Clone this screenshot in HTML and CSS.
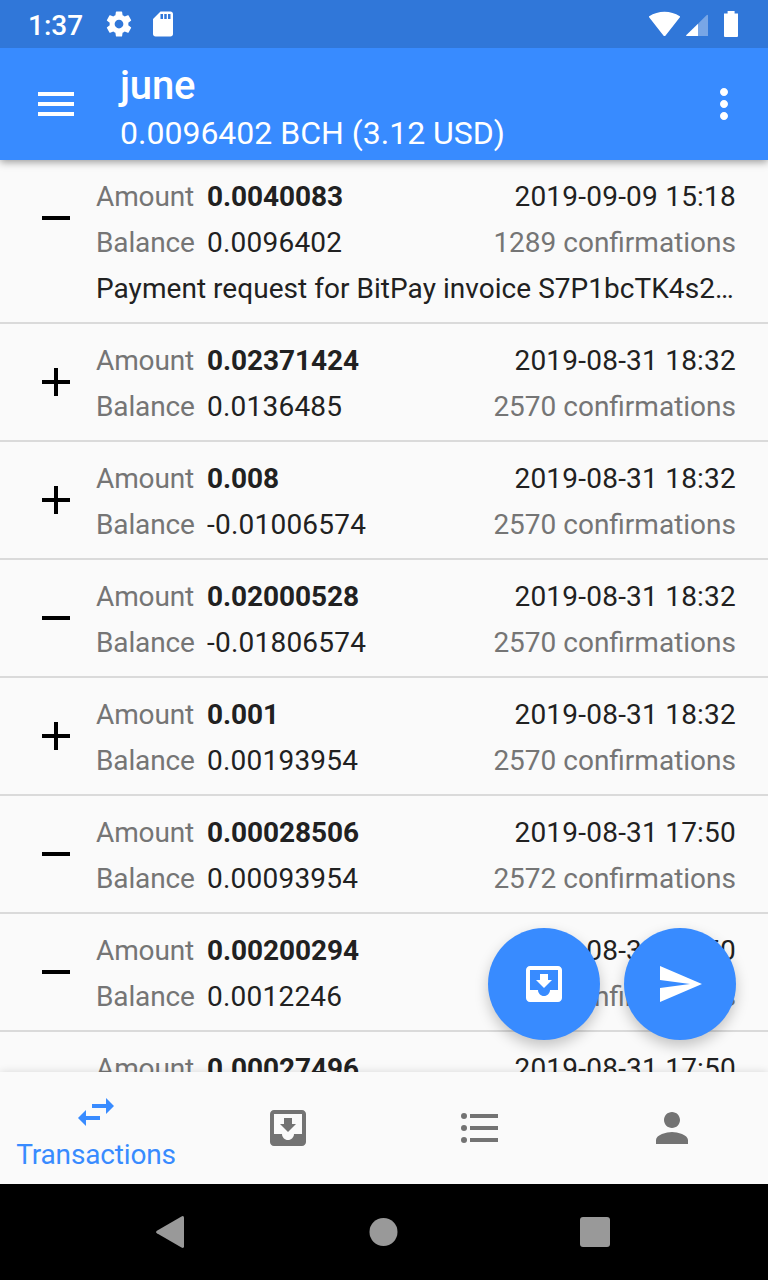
FILE: index.html
```html
<!DOCTYPE html>
<html lang="en">
<head>
<meta charset="utf-8">
<title>june</title>
<link rel="stylesheet" href="styles.css">
</head>
<body>
<div class="screen">
  <div class="status">
    <span class="clock">1:37</span>
    <svg class="s-icon" viewBox="0 0 24 24"><path d="M19.43 12.98c.04-.32.07-.64.07-.98s-.03-.66-.07-.98l2.11-1.65c.19-.15.24-.42.12-.64l-2-3.46c-.12-.22-.39-.3-.61-.22l-2.49 1c-.52-.4-1.08-.73-1.69-.98l-.38-2.65C14.46 2.18 14.25 2 14 2h-4c-.25 0-.46.18-.49.42l-.38 2.65c-.61.25-1.17.59-1.69.98l-2.49-1c-.23-.09-.49 0-.61.22l-2 3.46c-.13.22-.07.49.12.64l2.11 1.65c-.04.32-.07.65-.07.98s.03.66.07.98l-2.11 1.65c-.19.15-.24.42-.12.64l2 3.46c.12.22.39.3.61.22l2.49-1c.52.4 1.08.73 1.69.98l.38 2.65c.03.24.24.42.49.42h4c.25 0 .46-.18.49-.42l.38-2.65c.61-.25 1.17-.59 1.69-.98l2.49 1c.23.09.49 0 .61-.22l2-3.46c.12-.22.07-.49-.12-.64l-2.11-1.65zM12 15.5c-1.93 0-3.5-1.57-3.5-3.5s1.57-3.5 3.5-3.5 3.5 1.57 3.5 3.5-1.57 3.5-3.5 3.5z"/></svg>
    <svg class="s-icon" viewBox="0 0 24 24"><path d="M18 2h-8L4.02 8 4 20c0 1.1.9 2 2 2h12c1.1 0 2-.9 2-2V4c0-1.1-.9-2-2-2zm-6 6h-2V4h2v4zm3 0h-2V4h2v4zm3 0h-2V4h2v4z"/></svg>
    <svg class="radios" viewBox="0 0 90 28"><path d="M.2 6.2C4.700 3.200 10 1.700 15.500 1.700S26.300 3.200 30.800 6.200c.3.200.3.700.1 1L16.600 25.400c-.6.700-1.600.7-2.200 0L.1 7.200c-.2-.3-.2-.8.1-1z"/><path opacity=".35" d="M49 13.800 57.500 5.300Q59 4 59 5.500V26H49z"/><path d="M49 13.800V26H37.700Q36.500 26 37.400 25z"/><path d="M78.600 1h7v2.600H89V26q0 1-1 1H76q-1 0-1-1V3.600h3.600z"/></svg>
  </div>
  <header class="toolbar">
    <svg class="icon" viewBox="0 0 24 24"><path d="M3 18h18v-2H3v2zm0-5h18v-2H3v2zm0-7v2h18V6H3z"/></svg>
    <div class="heading">
      <div class="title">june</div>
      <div class="subtitle">0.0096402 BCH (3.12 USD)</div>
    </div>
    <svg class="icon" viewBox="0 0 24 24"><path d="M12 8c1.100 0 2-.9 2-2s-.9-2-2-2-2 .9-2 2 .9 2 2 2zm0 2c-1.100 0-2 .9-2 2s.9 2 2 2 2-.9 2-2-.9-2-2-2zm0 6c-1.100 0-2 .9-2 2s.9 2 2 2 2-.9 2-2-.9-2-2-2z"/></svg>
  </header>
  <main class="content">
    <div class="row"><i class="sign"></i><div class="grid"><span class="muted">Amount</span><b>0.0040083</b><span class="num">2019-09-09 15:18</span><span class="muted">Balance</span><span class="num">0.0096402</span><span class="muted">1289 confirmations</span><span class="memo">Payment request for BitPay invoice S7P1bcTK4s2…</span></div></div>
    <div class="row"><i class="sign plus"></i><div class="grid"><span class="muted">Amount</span><b>0.02371424</b><span class="num">2019-08-31 18:32</span><span class="muted">Balance</span><span class="num">0.0136485</span><span class="muted">2570 confirmations</span></div></div>
    <div class="row"><i class="sign plus"></i><div class="grid"><span class="muted">Amount</span><b>0.008</b><span class="num">2019-08-31 18:32</span><span class="muted">Balance</span><span class="num">-0.01006574</span><span class="muted">2570 confirmations</span></div></div>
    <div class="row"><i class="sign"></i><div class="grid"><span class="muted">Amount</span><b>0.02000528</b><span class="num">2019-08-31 18:32</span><span class="muted">Balance</span><span class="num">-0.01806574</span><span class="muted">2570 confirmations</span></div></div>
    <div class="row"><i class="sign plus"></i><div class="grid"><span class="muted">Amount</span><b>0.001</b><span class="num">2019-08-31 18:32</span><span class="muted">Balance</span><span class="num">0.00193954</span><span class="muted">2570 confirmations</span></div></div>
    <div class="row"><i class="sign"></i><div class="grid"><span class="muted">Amount</span><b>0.00028506</b><span class="num">2019-08-31 17:50</span><span class="muted">Balance</span><span class="num">0.00093954</span><span class="muted">2572 confirmations</span></div></div>
    <div class="row"><i class="sign"></i><div class="grid"><span class="muted">Amount</span><b>0.00200294</b><span class="num">2019-08-31 17:50</span><span class="muted">Balance</span><span class="num">0.0012246</span><span class="muted">2572 confirmations</span></div></div>
    <div class="row"><i class="sign"></i><div class="grid"><span class="muted">Amount</span><b>0.00027496</b><span class="num">2019-08-31 17:50</span></div></div>
    <div class="fabs">
      <div class="fab"><svg class="icon" viewBox="0 0 24 24"><path d="M19 3H4.990c-1.110 0-1.980.9-1.980 2L3 19c0 1.100.88 2 1.990 2H19c1.100 0 2-.9 2-2V5c0-1.100-.9-2-2-2zm0 12h-4c0 1.660-1.350 3-3 3s-3-1.340-3-3H4.990V5H19v10zm-3-5h-2V7h-4v3H8l4 4 4-4z"/></svg></div>
      <div class="fab"><svg class="icon" viewBox="0 0 24 24"><path d="M2.010 21L23 12 2.010 3 2 10l15 2-15 2z"/></svg></div>
    </div>
  </main>
  <nav class="tabs">
    <div class="tab active"><svg class="icon" viewBox="0 0 24 24"><path d="M6.990 11L3 15l3.990 4v-3H14v-2H6.990v-3zM21 9l-3.990-4v3H10v2h7.010v3L21 9z"/></svg><span>Transactions</span></div>
    <div class="tab"><svg class="icon" viewBox="0 0 24 24"><path d="M19 3H4.990c-1.110 0-1.980.9-1.980 2L3 19c0 1.100.88 2 1.990 2H19c1.100 0 2-.9 2-2V5c0-1.100-.9-2-2-2zm0 12h-4c0 1.660-1.350 3-3 3s-3-1.340-3-3H4.990V5H19v10zm-3-5h-2V7h-4v3H8l4 4 4-4z"/></svg></div>
    <div class="tab"><svg class="icon" viewBox="0 0 24 24"><circle cx="4" cy="6" r="1.500"/><circle cx="4" cy="12" r="1.500"/><circle cx="4" cy="18" r="1.500"/><path d="M7 19h14v-2H7v2zm0-6h14v-2H7v2zm0-8v2h14V5H7z"/></svg></div>
    <div class="tab"><svg class="icon" viewBox="0 0 24 24"><path d="M12 12c2.210 0 4-1.790 4-4s-1.790-4-4-4-4 1.790-4 4 1.790 4 4 4zm0 2c-2.670 0-8 1.340-8 4v2h16v-2c0-2.660-5.330-4-8-4z"/></svg></div>
  </nav>
  <div class="system">
    <svg viewBox="0 0 32 32"><path d="M2.900 14.700 27.500.4Q30 -.6 30 1.800V30.200Q30 32.600 27.500 31.600L2.900 17.300Q1.200 16 2.900 14.700z"/></svg>
    <svg viewBox="0 0 32 32"><circle cx="16.500" cy="16" r="14"/></svg>
    <svg viewBox="0 0 32 32"><rect x="1" y="1" width="30" height="30" rx="3"/></svg>
  </div>
</div>
</body>
</html>
```
FILE: styles.css
```css
* { box-sizing: border-box; }
body { margin: 0; background: #fafafa; font: 28px/46px Roboto, sans-serif; color: #212121; }
svg { display: block; fill: currentColor; flex: none; }
.screen { width: 768px; height: 1280px; display: flex; flex-direction: column; overflow: hidden; }
.status { height: 48px; flex: none; background: #3077d9; color: #fff; display: flex; align-items: center; gap: 14px; padding: 0 29px 0 28px; z-index: 3; }
.clock { width: 62px; font-weight: 500; font-size: 28px; line-height: 46px; padding-top: 4px; }
.s-icon { width: 30px; height: 30px; }
.radios { width: 90px; height: 28px; margin-left: auto; }
.toolbar { height: 112px; flex: none; background: #388bff; color: #fff; display: flex; align-items: center; padding: 0 20px 0 32px; box-shadow: 0 2px 8px rgba(0,0,0,.4); z-index: 2; }
.icon { width: 48px; height: 48px; }
.heading { flex: 1; padding-left: 40px; padding-top: 7px; }
.title { font-size: 40px; font-weight: 500; line-height: 50px; letter-spacing: -.2px; }
.subtitle { font-size: 32px; line-height: 44px; }
.content { flex: 1; min-height: 0; overflow: hidden; position: relative; }
.row { display: flex; border-bottom: 2px solid #dadada; padding: 0 32px; }
.sign { width: 28px; height: 28px; margin: 44px 26px 0 10px; flex: none; background: linear-gradient(#000, #000) center / 28px 4px no-repeat; }
.plus { background: linear-gradient(#000, #000) center / 28px 4px no-repeat, linear-gradient(#000, #000) center / 4px 28px no-repeat; }
.grid { flex: 1; display: grid; grid-template-columns: 111px 1fr auto; padding: 14px 0 10px; white-space: nowrap; }
.grid > :nth-child(3n) { text-align: right; }
.muted { color: #757575; }
.grid > .muted:nth-child(3n+1) { letter-spacing: -.12px; }
.num { letter-spacing: .22px; }
b { font-weight: 700; letter-spacing: -.08px; }
.memo { grid-column: 1 / -1; letter-spacing: .04px; }
.fabs { position: absolute; right: 32px; bottom: 32px; display: flex; gap: 24px; }
.fab { width: 112px; height: 112px; border-radius: 50%; background: #388bff; color: #fff; display: grid; place-items: center; box-shadow: 0 6px 14px rgba(0,0,0,.22); }
.tabs { height: 112px; flex: none; display: grid; grid-template-columns: repeat(4, 1fr); background: #fafafa; box-shadow: 0 0 8px rgba(0,0,0,.14); z-index: 1; color: #737373; }
.tab { display: flex; flex-direction: column; align-items: center; justify-content: center; }
.active { color: #388bff; justify-content: flex-start; padding-top: 16px; }
.active span { line-height: 38px; letter-spacing: -.16px; }
.system { height: 96px; flex: none; background: #000; color: #999; display: flex; justify-content: space-between; align-items: center; padding: 0 157px 0 154px; z-index: 2; }
.system svg { width: 32px; height: 32px; }
```
